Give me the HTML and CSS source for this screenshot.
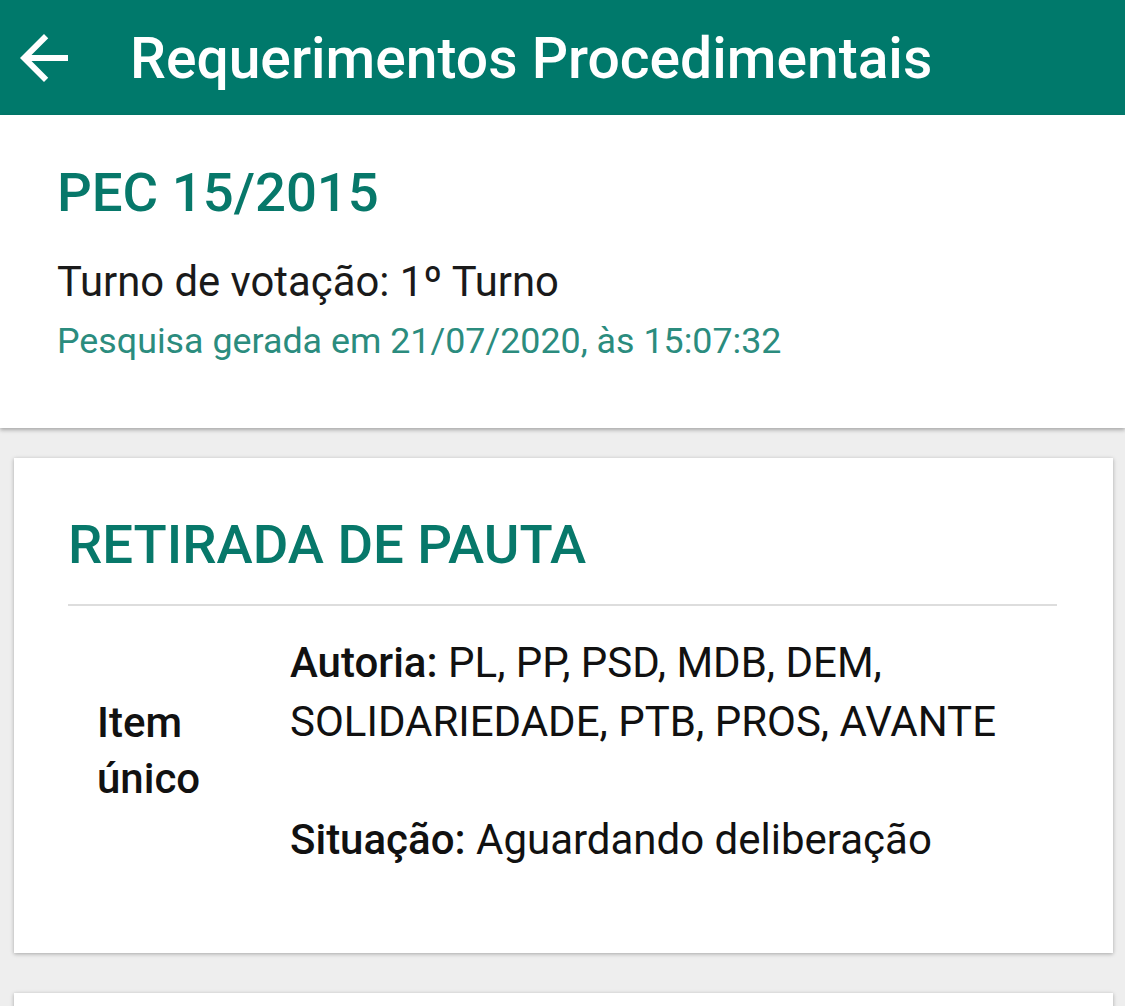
FILE: index.html
```
<!DOCTYPE html>
<html lang="pt">
<head>
<meta charset="utf-8">
<link rel="stylesheet" href="styles.css">
</head>
<body>
<header class="appbar">
  <svg class="back" viewBox="0 0 24 24" width="72" height="72"><path d="M20 11H7.83l5.59-5.59L12 4l-8 8 8 8 1.41-1.41L7.83 13H20v-2z" fill="#fff"/></svg>
  <span class="title">Requerimentos Procedimentais</span>
</header>
<section class="summary">
  <h1 class="pec">PEC 15/2015</h1>
  <p class="turno">Turno de votação: 1º Turno</p>
  <p class="gerada">Pesquisa gerada em 21/07/2020, às 15:07:32</p>
</section>
<section class="card">
  <h2 class="card-title">RETIRADA DE PAUTA</h2>
  <hr class="divider">
  <div class="item-row">
    <div class="label">Item único</div>
    <div class="info"><b>Autoria:</b> PL, PP, PSD, MDB, DEM, SOLIDARIEDADE, PTB, PROS, AVANTE<br><br><b>Situação:</b> Aguardando deliberação</div>
  </div>
</section>
<section class="card next"></section>
</body>
</html>
```
FILE: styles.css
```
html, body {
  margin: 0;
  padding: 0;
}
body {
  background: #eeeeee;
  font-family: Roboto, "Noto Sans", sans-serif;
  overflow: hidden;
  height: 1006px;
}
.appbar {
  height: 115px;
  background: #00796b;
  display: flex;
  align-items: center;
  box-sizing: border-box;
  padding-left: 8px;
}
.back {
  display: block;
}
.title {
  color: #fff;
  font-size: 57px;
  font-weight: 500;
  margin-left: 50px;
  line-height: 1;
  margin-top: 2px;
}
.summary {
  background: #fff;
  height: 313px;
  box-sizing: border-box;
  padding: 47px 57px 0;
  box-shadow: 0 2px 4px rgba(0,0,0,0.3);
}
.pec {
  margin: 0;
  color: #07786a;
  font-size: 54.5px;
  font-weight: 500;
  line-height: 60px;
}
.turno {
  margin: 36px 0 0;
  color: #1a1a1a;
  font-size: 41.8px;
  line-height: 48px;
}
.gerada {
  margin: 15px 0 0;
  color: #2b8c7e;
  font-size: 35.8px;
  line-height: 40px;
}
.card {
  background: #fff;
  margin: 30px 12px 0 14px;
  height: 495px;
  box-sizing: border-box;
  padding: 56px 56px 0 54px;
  box-shadow: 0 1px 4px rgba(0,0,0,0.3);
}
.card.next {
  margin-top: 40px;
  height: 60px;
}
.card-title {
  margin: 0;
  color: #07786a;
  font-size: 54.5px;
  font-weight: 500;
  line-height: 60px;
}
.divider {
  border: 0;
  border-top: 2px solid #dddddd;
  margin: 30px 0 0;
}
.item-row {
  display: flex;
  align-items: center;
  margin-top: 27px;
  color: #111;
  font-size: 42px;
}
.label {
  flex: 0 0 222px;
  box-sizing: border-box;
  padding: 0 70px 0 29px;
  font-weight: 500;
  line-height: 56px;
}
.info {
  flex: 1;
  line-height: 59px;
}
.info b {
  font-weight: 500;
}
```
